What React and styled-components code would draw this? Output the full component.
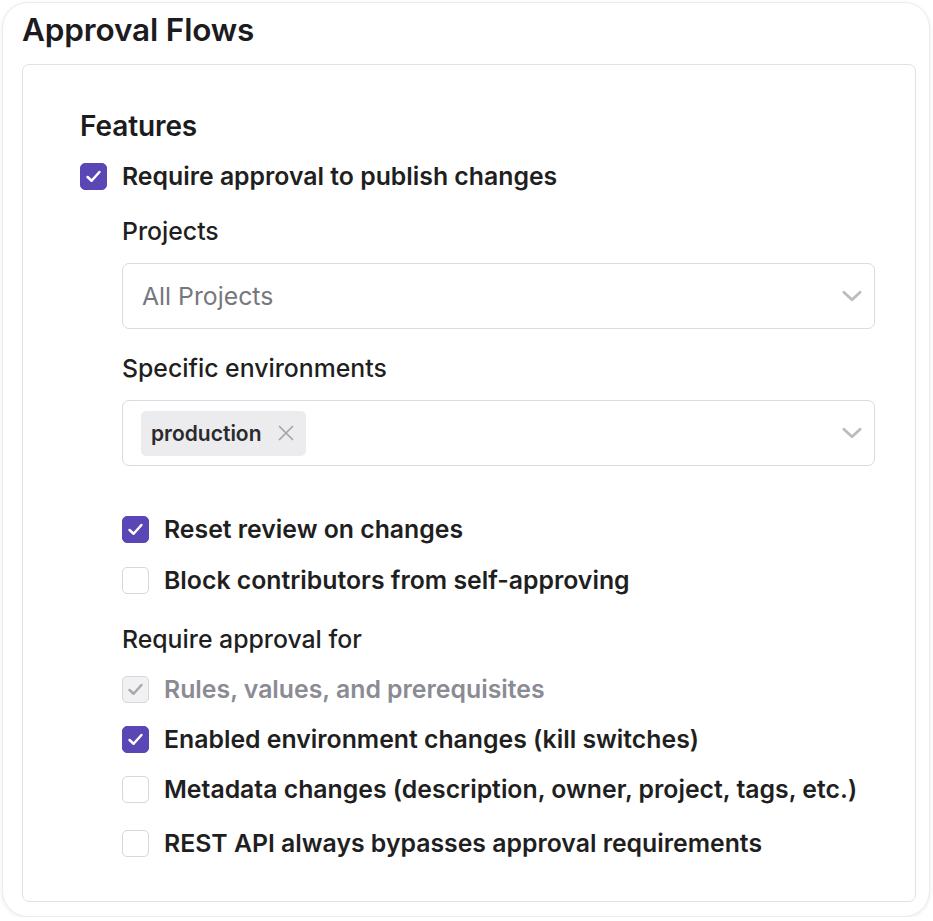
import React from "react";
import styled, { createGlobalStyle } from "styled-components";

const Global = createGlobalStyle`
  html, body { margin: 0; padding: 0; background: #ffffff; }
  body { font-family: Inter, "Noto Sans", sans-serif; color: #1d1d20; }
  * { box-sizing: border-box; }
`;

const Card = styled.div`
  margin: 2px 3px 0 2px;
  width: 928px;
  height: 915px;
  border-radius: 26px;
  background: #fff;
  border: 1px solid #ececec;
  box-shadow: 0 1px 4px rgba(0,0,0,0.08);
  padding: 9px 13px 14px 19px;
  display: flex;
  flex-direction: column;
`;

const Title = styled.h2`
  margin: 0;
  font-size: 31.5px;
  font-weight: 600;
  line-height: 36px;
  letter-spacing: -0.15px;
  color: #1c1c1f;
  height: 52px;
`;

const Panel = styled.div`
  flex: 1;
  border: 1.5px solid #e2e2e4;
  border-radius: 7px;
  padding: 46px 40px 0 57px;
  display: flex;
  flex-direction: column;
`;

const SectionTitle = styled.h3`
  margin: 0 0 21px;
  font-size: 28px;
  font-weight: 600;
  line-height: 30px;
  letter-spacing: -0.1px;
  color: #1c1c1f;
`;

const Row = styled.label`
  display: flex;
  align-items: center;
  gap: 15px;
  height: 28px;
  margin-bottom: ${p => p.$mb ?? 22}px;
  font-size: 24.8px;
  font-weight: 600;
  white-space: nowrap;
  color: ${p => (p.$disabled ? "#8b8b93" : "#1f1f22")};
`;

const Box = styled.span`
  width: 27px;
  height: 27px;
  flex: none;
  border-radius: 5px;
  display: flex;
  align-items: center;
  justify-content: center;
  background: ${p => (p.$checked ? (p.$disabled ? "#f1f1f3" : "#5a46b4") : "#fff")};
  border: 1.5px solid ${p => (p.$checked && !p.$disabled ? "#5a46b4" : "#d6d6dc")};
`;

const Nested = styled.div`
  padding-left: 42px;
  display: flex;
  flex-direction: column;
`;

const FieldLabel = styled.div`
  font-size: 24.8px;
  font-weight: 500;
  line-height: 28px;
  color: #1f1f22;
  margin-bottom: ${p => p.$mb ?? 18}px;
`;

const Select = styled.div`
  height: 66px;
  border: 1.5px solid #d9dbe0;
  border-radius: 7px;
  display: flex;
  align-items: center;
  padding: 0 9px 0 19px;
  margin-bottom: ${p => p.$mb ?? 25}px;
`;

const Placeholder = styled.span`
  flex: 1;
  font-size: 24.8px;
  color: #77777e;
`;

const Chips = styled.div`
  flex: 1;
  display: flex;
  align-items: center;
  margin-left: -1px;
`;

const Chip = styled.span`
  display: inline-flex;
  align-items: center;
  gap: 15px;
  height: 45px;
  padding: 0 11px 0 10px;
  background: #ececee;
  border-radius: 5px;
  font-size: 21px;
  font-weight: 600;
  color: #2a2a2e;
`;

const Check = ({ color = "#fff" }) => (
  <svg width="19" height="19" viewBox="0 0 16 16" fill="none">
    <path d="M3 8.4 L6.4 11.6 L13 4.2" stroke={color} strokeWidth="2.1" strokeLinecap="round" strokeLinejoin="round" />
  </svg>
);

const Chevron = () => (
  <svg width="26" height="26" viewBox="0 0 24 24" fill="none" style={{ flex: "none" }}>
    <path d="M4.5 8.5 L12 15.5 L19.5 8.5" stroke="#bcbcc0" strokeWidth="2.6" strokeLinecap="round" strokeLinejoin="round" />
  </svg>
);

const Close = () => (
  <svg width="18" height="18" viewBox="0 0 18 18" fill="none">
    <path d="M2.5 2.5 L15.5 15.5 M15.5 2.5 L2.5 15.5" stroke="#a4a4aa" strokeWidth="1.7" strokeLinecap="round" />
  </svg>
);

const CheckRow = ({ checked, disabled, children, mb }) => (
  <Row $disabled={disabled} $mb={mb}>
    <Box $checked={checked} $disabled={disabled}>
      {checked && <Check color={disabled ? "#a8a8ae" : "#fff"} />}
    </Box>
    {children}
  </Row>
);

export default function App() {
  return (
    <>
      <Global />
      <Card>
        <Title>Approval Flows</Title>
        <Panel>
          <SectionTitle>Features</SectionTitle>
          <CheckRow checked mb={27}>Require approval to publish changes</CheckRow>
          <Nested>
            <FieldLabel>Projects</FieldLabel>
            <Select>
              <Placeholder>All Projects</Placeholder>
              <Chevron />
            </Select>
            <FieldLabel>Specific environments</FieldLabel>
            <Select $mb={49}>
              <Chips>
                <Chip>production<Close /></Chip>
              </Chips>
              <Chevron />
            </Select>
            <CheckRow checked mb={23}>Reset review on changes</CheckRow>
            <CheckRow mb={31}>Block contributors from self-approving</CheckRow>
            <FieldLabel $mb={22}>Require approval for</FieldLabel>
            <CheckRow checked disabled>Rules, values, and prerequisites</CheckRow>
            <CheckRow checked>Enabled environment changes (kill switches)</CheckRow>
            <CheckRow mb={26}>Metadata changes (description, owner, project, tags, etc.)</CheckRow>
            <CheckRow>REST API always bypasses approval requirements</CheckRow>
          </Nested>
        </Panel>
      </Card>
    </>
  );
}
